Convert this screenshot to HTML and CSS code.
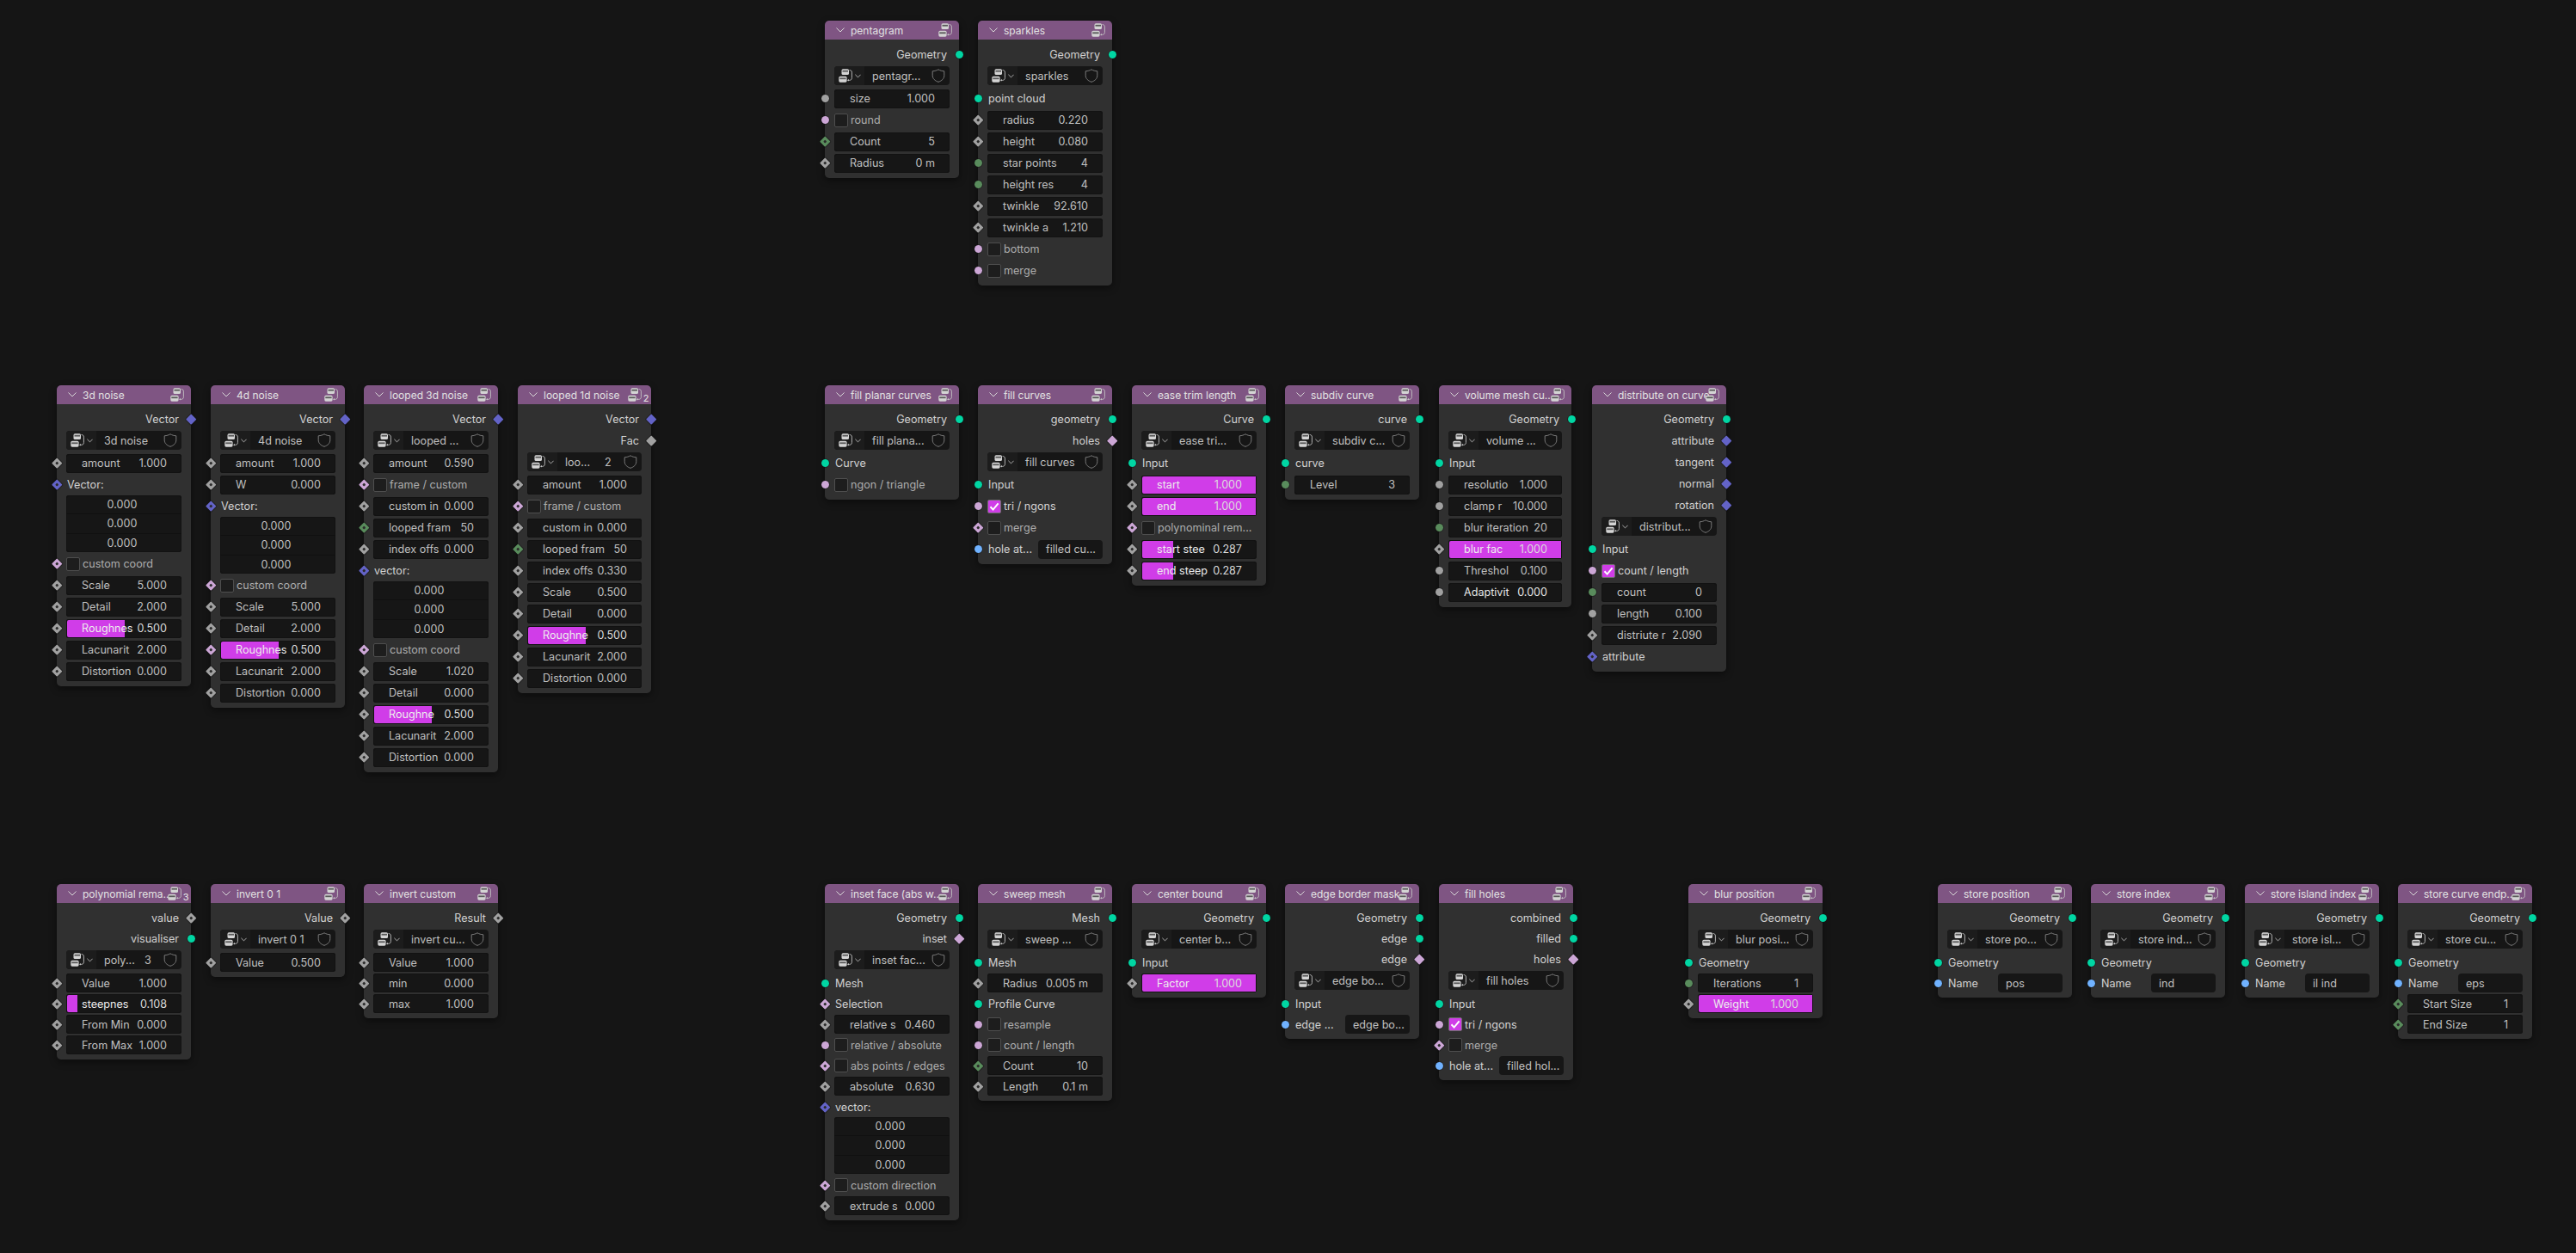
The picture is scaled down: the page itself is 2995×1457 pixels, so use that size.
FILE: index.html
```html
<!DOCTYPE html>
<html lang="en">
<head>
<meta charset="utf-8">
<title>Node editor</title>
<link rel="stylesheet" href="styles.css">
</head>
<body>
<svg class="defs" aria-hidden="true">
  <symbol id="chev" viewBox="0 0 10 6"><path d="M.5.5 5 5 9.500.5" fill="none" stroke="currentColor"/></symbol>
  <symbol id="grp" viewBox="0 0 16 16">
    <rect x="3.500" y=".3" width="8.500" height="6.700" rx="1.600" fill="#d4d4d4"/>
    <rect x="4.500" y="1.800" width="6.500" height="1.800" fill="#5a5a5a"/>
    <rect x=".3" y="8.800" width="9.300" height="6.900" rx="1.600" fill="#d4d4d4"/>
    <rect x="1.300" y="10.400" width="7.300" height="1.800" fill="#5a5a5a"/>
    <path d="M12.600 1.500c1.700 0 2.800 1 2.800 2.600v6.600c0 1.800-1.400 2.700-3 2.700h-1.800" fill="none" stroke="#c4c4c4" stroke-width=".9"/>
    <path d="M12 11.900v2.600l-1.800-1.300z" fill="#c4c4c4"/>
  </symbol>
  <symbol id="shield" viewBox="0 0 16 16"><path d="M8 .8c2 1.200 4.200 1.800 6.800 2v5c0 3.700-3 6.300-6.800 7.500C4.200 14.100 1.200 11.500 1.200 7.800v-5C3.800 2.600 6 2 8 .8z" fill="none" stroke="#7b7b7b" stroke-width="1"/></symbol>
  <symbol id="tick" viewBox="0 0 12 12"><path d="M1.500 6.300 4.600 9.600 10.600 2.400" fill="none" stroke="#fff" stroke-width="2"/></symbol>
</svg>
<main class="canvas">

<section class="node n-pentagram">
  <header class="hd"><svg class="cv"><use href="#chev"/></svg><span class="ti">pentagram</span><svg class="hi"><use href="#grp"/></svg></header>
  <div class="bd">
    <div class="row out"><span>Geometry</span><i class="s geo"></i></div>
    <div class="g"><span class="gi"><svg class="gic"><use href="#grp"/></svg><svg class="gcv"><use href="#chev"/></svg></span><span class="gn">pentagr...</span><svg class="gs"><use href="#shield"/></svg></div>
    <div class="row in"><i class="s flt"></i><div class="f"><span>size</span><span>1.000</span></div></div>
    <div class="row in"><i class="s bool"></i><div class="c"><b class="box"></b>round</div></div>
    <div class="row in"><i class="s int dd"></i><div class="f"><span>Count</span><span>5</span></div></div>
    <div class="row in"><i class="s flt dd"></i><div class="f"><span>Radius</span><span>0 m</span></div></div>
  </div>
</section>

<section class="node n-sparkles">
  <header class="hd"><svg class="cv"><use href="#chev"/></svg><span class="ti">sparkles</span><svg class="hi"><use href="#grp"/></svg></header>
  <div class="bd">
    <div class="row out"><span>Geometry</span><i class="s geo"></i></div>
    <div class="g"><span class="gi"><svg class="gic"><use href="#grp"/></svg><svg class="gcv"><use href="#chev"/></svg></span><span class="gn">sparkles</span><svg class="gs"><use href="#shield"/></svg></div>
    <div class="row in t"><i class="s geo"></i>point cloud</div>
    <div class="row in"><i class="s flt dd"></i><div class="f"><span>radius</span><span>0.220</span></div></div>
    <div class="row in"><i class="s flt dd"></i><div class="f"><span>height</span><span>0.080</span></div></div>
    <div class="row in"><i class="s int"></i><div class="f"><span>star points</span><span>4</span></div></div>
    <div class="row in"><i class="s int"></i><div class="f"><span>height res</span><span>4</span></div></div>
    <div class="row in"><i class="s flt dd"></i><div class="f"><span>twinkle</span><span>92.610</span></div></div>
    <div class="row in"><i class="s flt dd"></i><div class="f"><span>twinkle a</span><span>1.210</span></div></div>
    <div class="row in"><i class="s bool"></i><div class="c"><b class="box"></b>bottom</div></div>
    <div class="row in"><i class="s bool"></i><div class="c"><b class="box"></b>merge</div></div>
  </div>
</section>

<section class="node n-noise3">
  <header class="hd"><svg class="cv"><use href="#chev"/></svg><span class="ti">3d noise</span><svg class="hi"><use href="#grp"/></svg></header>
  <div class="bd">
    <div class="row out"><span>Vector</span><i class="s vec d"></i></div>
    <div class="g"><span class="gi"><svg class="gic"><use href="#grp"/></svg><svg class="gcv"><use href="#chev"/></svg></span><span class="gn">3d noise</span><svg class="gs"><use href="#shield"/></svg></div>
    <div class="row in"><i class="s flt dd"></i><div class="f"><span>amount</span><span>1.000</span></div></div>
    <div class="row in t"><i class="s vec dd"></i>Vector:</div>
    <div class="v"><span>0.000</span><span>0.000</span><span>0.000</span></div>
    <div class="row in"><i class="s bool dd"></i><div class="c"><b class="box"></b>custom coord</div></div>
    <div class="row in"><i class="s flt dd"></i><div class="f"><span>Scale</span><span>5.000</span></div></div>
    <div class="row in"><i class="s flt dd"></i><div class="f"><span>Detail</span><span>2.000</span></div></div>
    <div class="row in"><i class="s flt dd"></i><div class="f sl"><b class="fill" style="width:50%"></b><span>Roughnes</span><span>0.500</span></div></div>
    <div class="row in"><i class="s flt dd"></i><div class="f"><span>Lacunarit</span><span>2.000</span></div></div>
    <div class="row in"><i class="s flt dd"></i><div class="f"><span>Distortion</span><span>0.000</span></div></div>
  </div>
</section>

<section class="node n-noise4">
  <header class="hd"><svg class="cv"><use href="#chev"/></svg><span class="ti">4d noise</span><svg class="hi"><use href="#grp"/></svg></header>
  <div class="bd">
    <div class="row out"><span>Vector</span><i class="s vec d"></i></div>
    <div class="g"><span class="gi"><svg class="gic"><use href="#grp"/></svg><svg class="gcv"><use href="#chev"/></svg></span><span class="gn">4d noise</span><svg class="gs"><use href="#shield"/></svg></div>
    <div class="row in"><i class="s flt dd"></i><div class="f"><span>amount</span><span>1.000</span></div></div>
    <div class="row in"><i class="s flt dd"></i><div class="f"><span>W</span><span>0.000</span></div></div>
    <div class="row in t"><i class="s vec dd"></i>Vector:</div>
    <div class="v"><span>0.000</span><span>0.000</span><span>0.000</span></div>
    <div class="row in"><i class="s bool dd"></i><div class="c"><b class="box"></b>custom coord</div></div>
    <div class="row in"><i class="s flt dd"></i><div class="f"><span>Scale</span><span>5.000</span></div></div>
    <div class="row in"><i class="s flt dd"></i><div class="f"><span>Detail</span><span>2.000</span></div></div>
    <div class="row in"><i class="s bool dd"></i><div class="f sl"><b class="fill" style="width:50%"></b><span>Roughnes</span><span>0.500</span></div></div>
    <div class="row in"><i class="s flt dd"></i><div class="f"><span>Lacunarit</span><span>2.000</span></div></div>
    <div class="row in"><i class="s flt dd"></i><div class="f"><span>Distortion</span><span>0.000</span></div></div>
  </div>
</section>

<section class="node n-loop3">
  <header class="hd"><svg class="cv"><use href="#chev"/></svg><span class="ti">looped 3d noise</span><svg class="hi"><use href="#grp"/></svg></header>
  <div class="bd">
    <div class="row out"><span>Vector</span><i class="s vec d"></i></div>
    <div class="g"><span class="gi"><svg class="gic"><use href="#grp"/></svg><svg class="gcv"><use href="#chev"/></svg></span><span class="gn">looped ...</span><svg class="gs"><use href="#shield"/></svg></div>
    <div class="row in"><i class="s flt dd"></i><div class="f"><span>amount</span><span>0.590</span></div></div>
    <div class="row in"><i class="s bool dd"></i><div class="c"><b class="box"></b>frame / custom</div></div>
    <div class="row in"><i class="s flt dd"></i><div class="f"><span>custom in</span><span>0.000</span></div></div>
    <div class="row in"><i class="s int dd"></i><div class="f"><span>looped fram</span><span>50</span></div></div>
    <div class="row in"><i class="s flt dd"></i><div class="f"><span>index offs</span><span>0.000</span></div></div>
    <div class="row in t"><i class="s vec dd"></i>vector:</div>
    <div class="v"><span>0.000</span><span>0.000</span><span>0.000</span></div>
    <div class="row in"><i class="s bool dd"></i><div class="c"><b class="box"></b>custom coord</div></div>
    <div class="row in"><i class="s flt dd"></i><div class="f"><span>Scale</span><span>1.020</span></div></div>
    <div class="row in"><i class="s flt dd"></i><div class="f"><span>Detail</span><span>0.000</span></div></div>
    <div class="row in"><i class="s flt dd"></i><div class="f sl"><b class="fill" style="width:50%"></b><span>Roughne</span><span>0.500</span></div></div>
    <div class="row in"><i class="s flt dd"></i><div class="f"><span>Lacunarit</span><span>2.000</span></div></div>
    <div class="row in"><i class="s flt dd"></i><div class="f"><span>Distortion</span><span>0.000</span></div></div>
  </div>
</section>

<section class="node n-loop1">
  <header class="hd"><svg class="cv"><use href="#chev"/></svg><span class="ti">looped 1d noise</span><svg class="hi"><use href="#grp"/></svg><span class="ct">2</span></header>
  <div class="bd">
    <div class="row out"><span>Vector</span><i class="s vec d"></i></div>
    <div class="row out"><span>Fac</span><i class="s flt d"></i></div>
    <div class="g"><span class="gi"><svg class="gic"><use href="#grp"/></svg><svg class="gcv"><use href="#chev"/></svg></span><span class="gn">loo...</span><span class="gu">2</span><svg class="gs"><use href="#shield"/></svg></div>
    <div class="row in"><i class="s flt dd"></i><div class="f"><span>amount</span><span>1.000</span></div></div>
    <div class="row in"><i class="s bool dd"></i><div class="c"><b class="box"></b>frame / custom</div></div>
    <div class="row in"><i class="s flt dd"></i><div class="f"><span>custom in</span><span>0.000</span></div></div>
    <div class="row in"><i class="s int dd"></i><div class="f"><span>looped fram</span><span>50</span></div></div>
    <div class="row in"><i class="s flt dd"></i><div class="f"><span>index offs</span><span>0.330</span></div></div>
    <div class="row in"><i class="s flt dd"></i><div class="f"><span>Scale</span><span>0.500</span></div></div>
    <div class="row in"><i class="s flt dd"></i><div class="f"><span>Detail</span><span>0.000</span></div></div>
    <div class="row in"><i class="s flt dd"></i><div class="f sl"><b class="fill" style="width:50%"></b><span>Roughne</span><span>0.500</span></div></div>
    <div class="row in"><i class="s flt dd"></i><div class="f"><span>Lacunarit</span><span>2.000</span></div></div>
    <div class="row in"><i class="s flt dd"></i><div class="f"><span>Distortion</span><span>0.000</span></div></div>
  </div>
</section>

<section class="node n-planar">
  <header class="hd"><svg class="cv"><use href="#chev"/></svg><span class="ti">fill planar curves</span><svg class="hi"><use href="#grp"/></svg></header>
  <div class="bd">
    <div class="row out"><span>Geometry</span><i class="s geo"></i></div>
    <div class="g"><span class="gi"><svg class="gic"><use href="#grp"/></svg><svg class="gcv"><use href="#chev"/></svg></span><span class="gn">fill plana...</span><svg class="gs"><use href="#shield"/></svg></div>
    <div class="row in t"><i class="s geo"></i>Curve</div>
    <div class="row in"><i class="s bool"></i><div class="c"><b class="box"></b>ngon / triangle</div></div>
  </div>
</section>

<section class="node n-fillc">
  <header class="hd"><svg class="cv"><use href="#chev"/></svg><span class="ti">fill curves</span><svg class="hi"><use href="#grp"/></svg></header>
  <div class="bd">
    <div class="row out"><span>geometry</span><i class="s geo"></i></div>
    <div class="row out"><span>holes</span><i class="s bool d"></i></div>
    <div class="g"><span class="gi"><svg class="gic"><use href="#grp"/></svg><svg class="gcv"><use href="#chev"/></svg></span><span class="gn">fill curves</span><svg class="gs"><use href="#shield"/></svg></div>
    <div class="row in t"><i class="s geo"></i>Input</div>
    <div class="row in"><i class="s bool"></i><div class="c on"><b class="box"><svg class="tk"><use href="#tick"/></svg></b>tri / ngons</div></div>
    <div class="row in"><i class="s bool dd"></i><div class="c"><b class="box"></b>merge</div></div>
    <div class="row in"><i class="s str"></i><span class="nm">hole at...</span><div class="tf">filled cu...</div></div>
  </div>
</section>

<section class="node n-ease">
  <header class="hd"><svg class="cv"><use href="#chev"/></svg><span class="ti">ease trim length</span><svg class="hi"><use href="#grp"/></svg></header>
  <div class="bd">
    <div class="row out"><span>Curve</span><i class="s geo"></i></div>
    <div class="g"><span class="gi"><svg class="gic"><use href="#grp"/></svg><svg class="gcv"><use href="#chev"/></svg></span><span class="gn">ease tri...</span><svg class="gs"><use href="#shield"/></svg></div>
    <div class="row in t"><i class="s geo"></i>Input</div>
    <div class="row in"><i class="s flt dd"></i><div class="f sl"><b class="fill" style="width:100%"></b><span>start</span><span>1.000</span></div></div>
    <div class="row in"><i class="s flt dd"></i><div class="f sl"><b class="fill" style="width:100%"></b><span>end</span><span>1.000</span></div></div>
    <div class="row in"><i class="s bool dd"></i><div class="c"><b class="box"></b>polynominal rem...</div></div>
    <div class="row in"><i class="s flt dd"></i><div class="f sl"><b class="fill" style="width:27%"></b><span>start stee</span><span>0.287</span></div></div>
    <div class="row in"><i class="s flt dd"></i><div class="f sl"><b class="fill" style="width:27%"></b><span>end steep</span><span>0.287</span></div></div>
  </div>
</section>

<section class="node n-subdiv">
  <header class="hd"><svg class="cv"><use href="#chev"/></svg><span class="ti">subdiv curve</span><svg class="hi"><use href="#grp"/></svg></header>
  <div class="bd">
    <div class="row out"><span>curve</span><i class="s geo"></i></div>
    <div class="g"><span class="gi"><svg class="gic"><use href="#grp"/></svg><svg class="gcv"><use href="#chev"/></svg></span><span class="gn">subdiv c...</span><svg class="gs"><use href="#shield"/></svg></div>
    <div class="row in t"><i class="s geo"></i>curve</div>
    <div class="row in"><i class="s int"></i><div class="f"><span>Level</span><span>3</span></div></div>
  </div>
</section>

<section class="node n-volume">
  <header class="hd"><svg class="cv"><use href="#chev"/></svg><span class="ti">volume mesh cu...</span><svg class="hi"><use href="#grp"/></svg></header>
  <div class="bd">
    <div class="row out"><span>Geometry</span><i class="s geo"></i></div>
    <div class="g"><span class="gi"><svg class="gic"><use href="#grp"/></svg><svg class="gcv"><use href="#chev"/></svg></span><span class="gn">volume ...</span><svg class="gs"><use href="#shield"/></svg></div>
    <div class="row in t"><i class="s geo"></i>Input</div>
    <div class="row in"><i class="s flt"></i><div class="f"><span>resolutio</span><span>1.000</span></div></div>
    <div class="row in"><i class="s flt"></i><div class="f"><span>clamp r</span><span>10.000</span></div></div>
    <div class="row in"><i class="s int"></i><div class="f"><span>blur iteration</span><span>20</span></div></div>
    <div class="row in"><i class="s flt dd"></i><div class="f sl"><b class="fill" style="width:100%"></b><span>blur fac</span><span>1.000</span></div></div>
    <div class="row in"><i class="s flt"></i><div class="f"><span>Threshol</span><span>0.100</span></div></div>
    <div class="row in"><i class="s flt"></i><div class="f hot"><span>Adaptivit</span><span>0.000</span></div></div>
  </div>
</section>

<section class="node n-distrib">
  <header class="hd"><svg class="cv"><use href="#chev"/></svg><span class="ti">distribute on curve</span><svg class="hi"><use href="#grp"/></svg></header>
  <div class="bd">
    <div class="row out"><span>Geometry</span><i class="s geo"></i></div>
    <div class="row out"><span>attribute</span><i class="s vec d"></i></div>
    <div class="row out"><span>tangent</span><i class="s vec d"></i></div>
    <div class="row out"><span>normal</span><i class="s vec d"></i></div>
    <div class="row out"><span>rotation</span><i class="s vec d"></i></div>
    <div class="g"><span class="gi"><svg class="gic"><use href="#grp"/></svg><svg class="gcv"><use href="#chev"/></svg></span><span class="gn">distribut...</span><svg class="gs"><use href="#shield"/></svg></div>
    <div class="row in t"><i class="s geo"></i>Input</div>
    <div class="row in"><i class="s bool"></i><div class="c on"><b class="box"><svg class="tk"><use href="#tick"/></svg></b>count / length</div></div>
    <div class="row in"><i class="s int"></i><div class="f"><span>count</span><span>0</span></div></div>
    <div class="row in"><i class="s flt"></i><div class="f"><span>length</span><span>0.100</span></div></div>
    <div class="row in"><i class="s flt dd"></i><div class="f"><span>distriute r</span><span>2.090</span></div></div>
    <div class="row in t"><i class="s vec dd"></i>attribute</div>
  </div>
</section>

<section class="node low n-poly">
  <header class="hd"><svg class="cv"><use href="#chev"/></svg><span class="ti">polynomial rema...</span><svg class="hi"><use href="#grp"/></svg><span class="ct">3</span></header>
  <div class="bd">
    <div class="row out"><span>value</span><i class="s flt dd"></i></div>
    <div class="row out"><span>visualiser</span><i class="s geo"></i></div>
    <div class="g"><span class="gi"><svg class="gic"><use href="#grp"/></svg><svg class="gcv"><use href="#chev"/></svg></span><span class="gn">poly...</span><span class="gu">3</span><svg class="gs"><use href="#shield"/></svg></div>
    <div class="row in"><i class="s flt dd"></i><div class="f"><span>Value</span><span>1.000</span></div></div>
    <div class="row in"><i class="s flt dd"></i><div class="f sl"><b class="fill" style="width:9%"></b><span>steepnes</span><span>0.108</span></div></div>
    <div class="row in"><i class="s flt dd"></i><div class="f"><span>From Min</span><span>0.000</span></div></div>
    <div class="row in"><i class="s flt dd"></i><div class="f"><span>From Max</span><span>1.000</span></div></div>
  </div>
</section>

<section class="node low n-inv01">
  <header class="hd"><svg class="cv"><use href="#chev"/></svg><span class="ti">invert 0 1</span><svg class="hi"><use href="#grp"/></svg></header>
  <div class="bd">
    <div class="row out"><span>Value</span><i class="s flt dd"></i></div>
    <div class="g"><span class="gi"><svg class="gic"><use href="#grp"/></svg><svg class="gcv"><use href="#chev"/></svg></span><span class="gn">invert 0 1</span><svg class="gs"><use href="#shield"/></svg></div>
    <div class="row in"><i class="s flt dd"></i><div class="f"><span>Value</span><span>0.500</span></div></div>
  </div>
</section>

<section class="node low n-invc">
  <header class="hd"><svg class="cv"><use href="#chev"/></svg><span class="ti">invert custom</span><svg class="hi"><use href="#grp"/></svg></header>
  <div class="bd">
    <div class="row out"><span>Result</span><i class="s flt dd"></i></div>
    <div class="g"><span class="gi"><svg class="gic"><use href="#grp"/></svg><svg class="gcv"><use href="#chev"/></svg></span><span class="gn">invert cu...</span><svg class="gs"><use href="#shield"/></svg></div>
    <div class="row in"><i class="s flt dd"></i><div class="f"><span>Value</span><span>1.000</span></div></div>
    <div class="row in"><i class="s flt dd"></i><div class="f"><span>min</span><span>0.000</span></div></div>
    <div class="row in"><i class="s flt dd"></i><div class="f"><span>max</span><span>1.000</span></div></div>
  </div>
</section>

<section class="node low n-inset">
  <header class="hd"><svg class="cv"><use href="#chev"/></svg><span class="ti">inset face (abs w...</span><svg class="hi"><use href="#grp"/></svg></header>
  <div class="bd">
    <div class="row out"><span>Geometry</span><i class="s geo"></i></div>
    <div class="row out"><span>inset</span><i class="s bool d"></i></div>
    <div class="g"><span class="gi"><svg class="gic"><use href="#grp"/></svg><svg class="gcv"><use href="#chev"/></svg></span><span class="gn">inset fac...</span><svg class="gs"><use href="#shield"/></svg></div>
    <div class="row in t"><i class="s geo"></i>Mesh</div>
    <div class="row in t"><i class="s bool dd"></i>Selection</div>
    <div class="row in"><i class="s flt dd"></i><div class="f"><span>relative s</span><span>0.460</span></div></div>
    <div class="row in"><i class="s bool"></i><div class="c"><b class="box"></b>relative / absolute</div></div>
    <div class="row in"><i class="s bool dd"></i><div class="c"><b class="box"></b>abs points / edges</div></div>
    <div class="row in"><i class="s flt dd"></i><div class="f"><span>absolute</span><span>0.630</span></div></div>
    <div class="row in t"><i class="s vec dd"></i>vector:</div>
    <div class="v"><span>0.000</span><span>0.000</span><span>0.000</span></div>
    <div class="row in"><i class="s bool dd"></i><div class="c"><b class="box"></b>custom direction</div></div>
    <div class="row in"><i class="s flt dd"></i><div class="f"><span>extrude s</span><span>0.000</span></div></div>
  </div>
</section>

<section class="node low n-sweep">
  <header class="hd"><svg class="cv"><use href="#chev"/></svg><span class="ti">sweep mesh</span><svg class="hi"><use href="#grp"/></svg></header>
  <div class="bd">
    <div class="row out"><span>Mesh</span><i class="s geo"></i></div>
    <div class="g"><span class="gi"><svg class="gic"><use href="#grp"/></svg><svg class="gcv"><use href="#chev"/></svg></span><span class="gn">sweep ...</span><svg class="gs"><use href="#shield"/></svg></div>
    <div class="row in t"><i class="s geo"></i>Mesh</div>
    <div class="row in"><i class="s flt dd"></i><div class="f"><span>Radius</span><span>0.005 m</span></div></div>
    <div class="row in t"><i class="s geo"></i>Profile Curve</div>
    <div class="row in"><i class="s bool"></i><div class="c"><b class="box"></b>resample</div></div>
    <div class="row in"><i class="s bool"></i><div class="c"><b class="box"></b>count / length</div></div>
    <div class="row in"><i class="s int dd"></i><div class="f"><span>Count</span><span>10</span></div></div>
    <div class="row in"><i class="s flt dd"></i><div class="f"><span>Length</span><span>0.1 m</span></div></div>
  </div>
</section>

<section class="node low n-center">
  <header class="hd"><svg class="cv"><use href="#chev"/></svg><span class="ti">center bound</span><svg class="hi"><use href="#grp"/></svg></header>
  <div class="bd">
    <div class="row out"><span>Geometry</span><i class="s geo"></i></div>
    <div class="g"><span class="gi"><svg class="gic"><use href="#grp"/></svg><svg class="gcv"><use href="#chev"/></svg></span><span class="gn">center b...</span><svg class="gs"><use href="#shield"/></svg></div>
    <div class="row in t"><i class="s geo"></i>Input</div>
    <div class="row in"><i class="s flt dd"></i><div class="f sl"><b class="fill" style="width:100%"></b><span>Factor</span><span>1.000</span></div></div>
  </div>
</section>

<section class="node low n-edge">
  <header class="hd"><svg class="cv"><use href="#chev"/></svg><span class="ti">edge border mask</span><svg class="hi"><use href="#grp"/></svg></header>
  <div class="bd">
    <div class="row out"><span>Geometry</span><i class="s geo"></i></div>
    <div class="row out"><span>edge</span><i class="s geo"></i></div>
    <div class="row out"><span>edge</span><i class="s bool d"></i></div>
    <div class="g"><span class="gi"><svg class="gic"><use href="#grp"/></svg><svg class="gcv"><use href="#chev"/></svg></span><span class="gn">edge bo...</span><svg class="gs"><use href="#shield"/></svg></div>
    <div class="row in t"><i class="s geo"></i>Input</div>
    <div class="row in"><i class="s str"></i><span class="nm">edge ...</span><div class="tf">edge bo...</div></div>
  </div>
</section>

<section class="node low n-holes">
  <header class="hd"><svg class="cv"><use href="#chev"/></svg><span class="ti">fill holes</span><svg class="hi"><use href="#grp"/></svg></header>
  <div class="bd">
    <div class="row out"><span>combined</span><i class="s geo"></i></div>
    <div class="row out"><span>filled</span><i class="s geo"></i></div>
    <div class="row out"><span>holes</span><i class="s bool d"></i></div>
    <div class="g"><span class="gi"><svg class="gic"><use href="#grp"/></svg><svg class="gcv"><use href="#chev"/></svg></span><span class="gn">fill holes</span><svg class="gs"><use href="#shield"/></svg></div>
    <div class="row in t"><i class="s geo"></i>Input</div>
    <div class="row in"><i class="s bool"></i><div class="c on"><b class="box"><svg class="tk"><use href="#tick"/></svg></b>tri / ngons</div></div>
    <div class="row in"><i class="s bool dd"></i><div class="c"><b class="box"></b>merge</div></div>
    <div class="row in"><i class="s str"></i><span class="nm">hole at...</span><div class="tf">filled hol...</div></div>
  </div>
</section>

<section class="node low n-blur">
  <header class="hd"><svg class="cv"><use href="#chev"/></svg><span class="ti">blur position</span><svg class="hi"><use href="#grp"/></svg></header>
  <div class="bd">
    <div class="row out"><span>Geometry</span><i class="s geo"></i></div>
    <div class="g"><span class="gi"><svg class="gic"><use href="#grp"/></svg><svg class="gcv"><use href="#chev"/></svg></span><span class="gn">blur posi...</span><svg class="gs"><use href="#shield"/></svg></div>
    <div class="row in t"><i class="s geo"></i>Geometry</div>
    <div class="row in"><i class="s int"></i><div class="f"><span>Iterations</span><span>1</span></div></div>
    <div class="row in"><i class="s flt dd"></i><div class="f sl"><b class="fill" style="width:100%"></b><span>Weight</span><span>1.000</span></div></div>
  </div>
</section>

<section class="node low n-spos">
  <header class="hd"><svg class="cv"><use href="#chev"/></svg><span class="ti">store position</span><svg class="hi"><use href="#grp"/></svg></header>
  <div class="bd">
    <div class="row out"><span>Geometry</span><i class="s geo"></i></div>
    <div class="g"><span class="gi"><svg class="gic"><use href="#grp"/></svg><svg class="gcv"><use href="#chev"/></svg></span><span class="gn">store po...</span><svg class="gs"><use href="#shield"/></svg></div>
    <div class="row in t"><i class="s geo"></i>Geometry</div>
    <div class="row in"><i class="s str"></i><span class="nm">Name</span><div class="tf">pos</div></div>
  </div>
</section>

<section class="node low n-sidx">
  <header class="hd"><svg class="cv"><use href="#chev"/></svg><span class="ti">store index</span><svg class="hi"><use href="#grp"/></svg></header>
  <div class="bd">
    <div class="row out"><span>Geometry</span><i class="s geo"></i></div>
    <div class="g"><span class="gi"><svg class="gic"><use href="#grp"/></svg><svg class="gcv"><use href="#chev"/></svg></span><span class="gn">store ind...</span><svg class="gs"><use href="#shield"/></svg></div>
    <div class="row in t"><i class="s geo"></i>Geometry</div>
    <div class="row in"><i class="s str"></i><span class="nm">Name</span><div class="tf">ind</div></div>
  </div>
</section>

<section class="node low n-sisl">
  <header class="hd"><svg class="cv"><use href="#chev"/></svg><span class="ti">store island index</span><svg class="hi"><use href="#grp"/></svg></header>
  <div class="bd">
    <div class="row out"><span>Geometry</span><i class="s geo"></i></div>
    <div class="g"><span class="gi"><svg class="gic"><use href="#grp"/></svg><svg class="gcv"><use href="#chev"/></svg></span><span class="gn">store isl...</span><svg class="gs"><use href="#shield"/></svg></div>
    <div class="row in t"><i class="s geo"></i>Geometry</div>
    <div class="row in"><i class="s str"></i><span class="nm">Name</span><div class="tf">il ind</div></div>
  </div>
</section>

<section class="node low n-scur">
  <header class="hd"><svg class="cv"><use href="#chev"/></svg><span class="ti">store curve endp...</span><svg class="hi"><use href="#grp"/></svg></header>
  <div class="bd">
    <div class="row out"><span>Geometry</span><i class="s geo"></i></div>
    <div class="g"><span class="gi"><svg class="gic"><use href="#grp"/></svg><svg class="gcv"><use href="#chev"/></svg></span><span class="gn">store cu...</span><svg class="gs"><use href="#shield"/></svg></div>
    <div class="row in t"><i class="s geo"></i>Geometry</div>
    <div class="row in"><i class="s str"></i><span class="nm">Name</span><div class="tf">eps</div></div>
    <div class="row in"><i class="s int dd"></i><div class="f"><span>Start Size</span><span>1</span></div></div>
    <div class="row in"><i class="s int dd"></i><div class="f"><span>End Size</span><span>1</span></div></div>
  </div>
</section>

</main>
</body>
</html>
```

FILE: styles.css
```css
* { box-sizing: border-box; }
html, body { margin: 0; height: 100%; }
body {
  background: #151515;
  color: #d2d2d2;
  font-family: Inter, "Noto Sans", sans-serif;
  font-size: 12.6px;
  overflow: hidden;
}
.defs { display: none; }
.canvas { position: relative; width: 2995px; height: 1457px; overflow: hidden; }

/* node placement on the free canvas */
.node { position: absolute; width: 156px; --p: 25px; --pt: 4.5px; --gt: 1.5px; --gb: 3px; }
.node.low { --p: 24px; --pt: 5px; --gt: 2px; --gb: 4px; }

.n-pentagram { left: 959px; top: 24px; }
.n-sparkles { left: 1137px; top: 24px; }
.n-noise3 { left: 66px; top: 448px; }
.n-noise4 { left: 245px; top: 448px; }
.n-loop3 { left: 423px; top: 448px; }
.n-loop1 { left: 602px; top: 448px; width: 155px; }
.n-planar { left: 959px; top: 448px; }
.n-fillc { left: 1137px; top: 448px; }
.n-ease { left: 1316px; top: 448px; }
.n-subdiv { left: 1494px; top: 448px; }
.n-volume { left: 1673px; top: 448px; width: 154px; }
.n-distrib { left: 1851px; top: 448px; }
.n-poly { left: 66px; top: 1028px; }
.n-inv01 { left: 245px; top: 1028px; }
.n-invc { left: 423px; top: 1028px; }
.n-inset { left: 959px; top: 1028px; }
.n-sweep { left: 1137px; top: 1028px; }
.n-center { left: 1316px; top: 1028px; }
.n-edge { left: 1494px; top: 1028px; }
.n-holes { left: 1673px; top: 1028px; }
.n-blur { left: 1963px; top: 1028px; }
.n-spos { left: 2253px; top: 1028px; }
.n-sidx { left: 2431px; top: 1028px; }
.n-sisl { left: 2610px; top: 1028px; }
.n-scur { left: 2788px; top: 1028px; }

.node {
  border-radius: 5px;
  box-shadow: 0 3px 9px rgba(0, 0, 0, .45);
}

/* header */
.hd {
  position: relative;
  height: 22px;
  background: #7f5583;
  border-radius: 5px 5px 0 0;
  display: flex;
  align-items: center;
  padding-left: 30px;
  color: #e2e2e2;
  font-size: 12px;
  white-space: nowrap;
}
.cv { position: absolute; left: 13px; top: 8px; width: 10px; height: 6px; color: #d8d8d8; }
.hi { position: absolute; right: 8px; top: 3px; width: 16px; height: 16px; }
.hd:has(.ct) .hi { right: 11px; }
.ct { position: absolute; right: 2.5px; top: 8px; font-size: 11px; line-height: 14px; color: #e6e6e6; }

/* body */
.bd {
  background: #303030;
  border-radius: 0 0 5px 5px;
  padding: var(--pt) 0 5px;
}
.row {
  position: relative;
  height: var(--p);
  display: flex;
  align-items: center;
  padding: 0 11px;
  white-space: nowrap;
}
.out { justify-content: flex-end; padding-right: 14px; }
.t { padding-left: 12px; }

/* sockets */
.s {
  position: absolute;
  top: 50%;
  width: 9px;
  height: 9px;
  margin-top: -4.5px;
  border-radius: 50%;
  background: var(--c);
  outline: 1.5px solid rgba(20, 20, 20, .45);
}
.in .s { left: -4.5px; }
.out .s { right: -4.5px; }
.d, .dd { width: 8.5px; height: 8.5px; margin-top: -4.25px; border-radius: 1px; transform: rotate(45deg); }
.in .d, .in .dd { left: -4.25px; }
.out .d, .out .dd { right: -4.25px; }
.dd::after {
  content: "";
  position: absolute;
  left: 2.75px;
  top: 2.75px;
  width: 3px;
  height: 3px;
  background: #2a2a2a;
  border-radius: 1px;
}
.geo { --c: #00d6a3; }
.flt { --c: #a1a1a1; }
.bool { --c: #cca6d6; }
.vec { --c: #6363c7; }
.int { --c: #598c5c; }
.str { --c: #70b2ff; }

/* number fields */
.f {
  flex: 1;
  height: 22px;
  min-width: 0;
  position: relative;
  display: flex;
  justify-content: space-between;
  align-items: center;
  padding: 0 17px 0 18px;
  background: #161616;
  border-radius: 3px;
  box-shadow: inset 0 0 0 1px #121212;
  color: #c0c0c0;
  overflow: hidden;
}
.f span { position: relative; }
.fill {
  position: absolute;
  left: 1px;
  top: 1px;
  bottom: 1px;
  background: #d03de8;
  border-radius: 2px 0 0 2px;
  max-width: calc(100% - 2px);
}
.sl span { color: #ededed; }
.sl span:last-child { color: #dcdcdc; }
.hot { color: #e6e6e6; }

/* vector block */
.v {
  display: flex;
  flex-direction: column;
  height: 66px;
  margin: 0 11px 1px;
  background: #161616;
  border-radius: 3px;
  box-shadow: inset 0 0 0 1px #121212;
  color: #c0c0c0;
}
.v span {
  flex: 1;
  display: flex;
  align-items: center;
  justify-content: center;
  padding-right: 4px;
}
.v span + span { border-top: 1px solid #101010; }

/* checkbox */
.c { display: flex; align-items: center; color: #adadad; }
.c.on { color: #d4d4d4; }
.box {
  width: 16px;
  height: 16px;
  flex: none;
  margin-right: 3px;
  background: #1d1d1d;
  border: 1px solid #4e4e4e;
  border-radius: 2px;
  display: flex;
  align-items: center;
  justify-content: center;
}
.on .box { background: #d03de8; border-color: #6e6e6e; }
.tk { width: 12px; height: 12px; }

/* group selector */
.g {
  display: flex;
  align-items: center;
  height: 22px;
  margin: var(--gt) 11px var(--gb);
  background: #161616;
  border-radius: 4px;
  overflow: hidden;
  color: #c0c0c0;
  white-space: nowrap;
}
.gi {
  width: 35px;
  height: 100%;
  flex: none;
  display: flex;
  align-items: center;
  padding-left: 5px;
  background: #1c1c1c;
}
.gic { width: 16px; height: 16px; flex: none; }
.gcv { width: 7px; height: 5px; flex: none; margin-left: 3px; color: #e8e8e8; }
.gn { flex: 1; padding-left: 9px; min-width: 0; overflow: hidden; }
.gu { width: 22px; flex: none; text-align: left; }
.gs { width: 16px; height: 16px; flex: none; margin-right: 5px; }

/* string input */
.nm { flex: 1; min-width: 0; padding-left: 1px; }
.tf {
  width: 75px;
  height: 22px;
  flex: none;
  display: flex;
  align-items: center;
  padding-left: 9px;
  background: #161616;
  border-radius: 4px;
  color: #c0c0c0;
}
```
